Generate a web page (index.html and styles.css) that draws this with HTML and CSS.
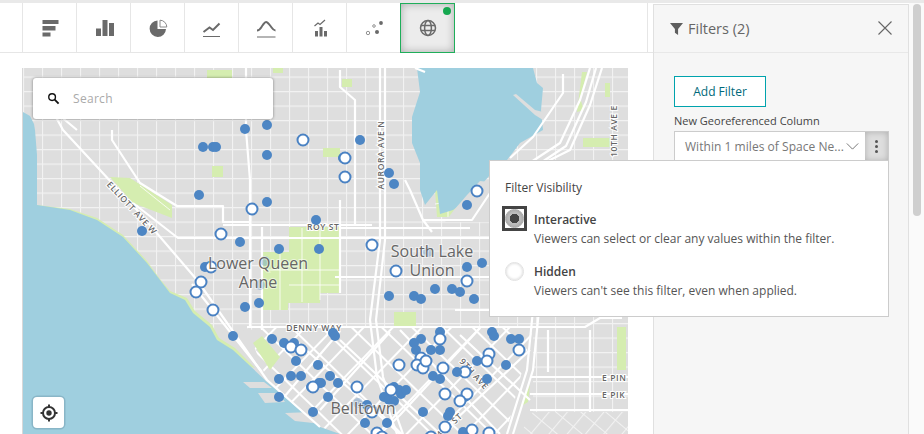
FILE: index.html
```html
<!DOCTYPE html>
<html lang="en">
<head>
<meta charset="utf-8">
<title>Map with filters</title>
<link rel="stylesheet" href="styles.css">
</head>
<body>
<div class="page">
  <main class="main">
    <nav class="toolbar">
      <button class="tool"><svg class="ico" viewBox="0 0 24 24"><path d="M4.500 4h16v4h-16zM4.500 10h13v4.500h-13zM4.500 16.500h8v4h-8z"/></svg></button>
      <button class="tool"><svg class="ico" viewBox="0 0 24 24"><path d="M4 12.500h5V20H4zM10.500 4H15.500V20h-5zM17 7h5v13h-5z"/></svg></button>
      <button class="tool"><svg class="ico" viewBox="0 0 24 24"><path d="M11.500 4.500v8.500h8.500A8.200 8.200 0 1 1 11.500 4.500z"/><path d="M14 4.200v6.800h6.800A6.900 6.900 0 0 0 14 4.200z" class="ico-slice"/></svg></button>
      <button class="tool"><svg class="ico" viewBox="0 0 24 24"><path d="M3.500 16l6-4.500 3.500 2.500 6.500-6.500" class="ico-line"/><path d="M3 20h17v1H3z"/></svg></button>
      <button class="tool"><svg class="ico" viewBox="0 0 24 24"><path d="M3 14.500c3 0 4-3 5.500-5S10.500 6 12 6s3 2 4.500 4S19 14.500 21.500 14.500" class="ico-line"/><path d="M3 20.500H21.500v1H3z"/></svg></button>
      <button class="tool"><svg class="ico" viewBox="0 0 24 24"><path d="M7 15h3v5.500H7zM11.500 11h3v9.500h-3zM16 15h3v5.500h-3z"/><path d="M6.500 10l3.500-3 2 1.500 5-4.500" class="ico-thin"/></svg></button>
      <button class="tool"><svg class="ico" viewBox="0 0 24 24"><circle cx="19" cy="7" r="1.900"/><circle cx="15" cy="16" r="2"/><circle cx="12" cy="10" r="1.300" class="ico-hollow"/><circle cx="6" cy="17" r="1.700" class="ico-hollow"/></svg></button>
      <button class="tool tool-active"><span class="badge"></span><svg class="ico" viewBox="0 0 24 24"><g class="ico-globe"><circle cx="12" cy="12" r="7.500"/><ellipse cx="12" cy="12" rx="3.400" ry="7.500"/><path d="M5 9.500h14M5 14.500h14"/></g></svg></button>
      <span class="toolbar-end"></span>
    </nav>
    <section class="map-wrap">
      <div class="map">
        <svg class="map-svg" viewBox="23 68 605 366" preserveAspectRatio="none">
          <defs>
            <pattern id="gridA" width="19" height="14.500" patternUnits="userSpaceOnUse" x="4" y="4">
              <path d="M0 .5H19M.5 0V14.500" class="grid-line"/>
            </pattern>
            <pattern id="gridB" width="21" height="21" patternUnits="userSpaceOnUse" patternTransform="rotate(44 300 340)">
              <path d="M0 1H21M1 0V21" class="grid-heavy"/>
            </pattern>
            <pattern id="gridC" width="14" height="16" patternUnits="userSpaceOnUse" patternTransform="rotate(40 560 420)">
              <path d="M0 .5H14M.5 0V16" class="grid-line"/>
            </pattern>
          </defs>
          <rect x="23" y="68" width="605" height="366" class="land"/>
          <rect x="23" y="68" width="605" height="366" fill="url(#gridA)"/>
          <path d="M140 340L270 328H533V434H300z" class="land"/>
          <path d="M247 328L267 380 320 427 340 434H506L533 328z" fill="url(#gridB)"/>
          <path d="M533 412H628V434H520z" class="land"/>
          <path d="M533 412H628V434H520z" fill="url(#gridC)"/>

          <g class="park">
            <path d="M207 70h25v8h-25zM273 68h10v5h-10zM342 79h10v8h-10zM212 166h11v11h-11z"/>
            <path d="M110 177L130 178 172 205V218L133 203z"/>
            <path d="M289 227H340V293H320V303H288V310H263V252H289z"/>
            <path d="M37 205L70 209 97 218 123 235 147 261 160 279 170 291 187 298 195 311 212 325 219 338 235 348 249 362 255 368 247 366 230 354 212 342 205 330 190 318 180 303 165 298 150 278 120 240 95 224 68 214 37 207z"/>
            <path d="M253 343L262 336 280 357 270 370z"/>
            <path d="M435 190H460V217H437zM323 148H340V157H323zM583 138H610V147H583zM605 83H610V97H605zM617 327H626V370H617zM394 312H416V326H394zM520 407L530 385 528 402z"/>
            <path d="M582 72L587 72 580 98 584 110 577 112z"/>
          </g>
          <path class="grid-soft" d="M435 204L460 200M448 190V217M302 228V302M320 228V300M264 270H340M280 252V310M289 285H340M140 186L170 210"/>

          <path class="water" d="M23 112L30 116 34 124 35 130 37 155 37 205 70 210 97 220 123 237 147 263 160 280 170 293 185 300 193 313 210 327 217 340 233 350 247 363 267 382 320 427 340 434H23z"/>
          <path class="water" d="M417 68H533L537 83 543 88 541 110 543 130 520 143 507 160 490 175 483 183 467 200 453 210 440 214 437 190 425 205 420 190 420 163 412 143 412 117 420 92z"/>
          <path class="land" d="M513 95L516 94 535 110 543 112V120L535 115zM243 382L264 382 272 388H250zM258 393L278 393 285 402 265 403zM285 413L312 412 322 424 295 421z"/>
          <path class="land" d="M454 210L467 195 480 181 489 182V222H445z"/>

          <g class="road">
            <path d="M40 88L63 130 137 210 197 280 267 380 320 427"/>
            <path d="M53 110L77 130M192 284L262 372"/>
            <path d="M112 130V140L140 183 177 206H223V222H250"/>
            <path d="M133 203L178 238H505"/>
            <path d="M223 225H340H372M340 228H470"/>
            <path d="M246 68V130L250 180V327"/>
            <path d="M262 227V330"/>
            <path d="M247 327H585L600 318 622 318"/>
            <path d="M380 68V240L370 320 377 377 397 434"/>
            <path d="M385 68V240L376 320 383 377 403 434"/>
            <path d="M340 70V87L355 100V225"/>
            <path d="M340 200V293"/>
            <path d="M423 220H472L490 193M432 232L423 220 410 190 405 180"/>
            <path d="M563 74V93L533 137 510 158M590 68L580 100 560 143 522 168M596 68L586 102 566 146 530 170M602 68L590 105 570 150 540 165"/>
            <path d="M335 277H489M455 310H490M415 68L425 72"/>
            <path d="M533 310L527 370 507 434"/>
            <path d="M539 310L533 370 513 434"/>
            <path d="M530 377H628M530 394H628M530 410H628M590 330V412M548 330V372"/>
            <path d="M340 331L300 378 285 396M390 332L320 410M480 328L400 415 380 434M530 350L440 434"/>
            <path d="M295 340L400 434M340 340L440 434M400 330L500 434M460 335L530 400"/>
          </g>

          <g class="label">
            <text x="132" y="211" class="street" transform="rotate(47 132 208)" text-anchor="middle">ELLIOTT AVE W</text>
            <text x="384" y="155" class="street" transform="rotate(-90 384 155)" text-anchor="middle">AURORA AVE N</text>
            <text x="617" y="131" class="street" transform="rotate(-90 617 131)" text-anchor="middle">10TH AVE E</text>
            <text x="314" y="331" class="street" text-anchor="middle">DENNY WAY</text>
            <text x="307" y="230" class="street">ROY ST</text>
            <text x="474" y="377" class="street" transform="rotate(48 474 374)" text-anchor="middle">9TH AVE</text>
            <text x="602" y="381" class="street">E PIN</text>
            <text x="602" y="398" class="street">E PIK</text>
            <text x="450" y="428" class="street" transform="rotate(-42 450 426)" text-anchor="middle">4TH ST</text>
          </g>

          <g class="dot">
            <circle cx="245" cy="129" r="5"/><circle cx="267" cy="125" r="5"/><circle cx="203" cy="147" r="5"/><circle cx="213" cy="147" r="5"/><circle cx="216" cy="147" r="5"/><circle cx="267" cy="155" r="5"/><circle cx="199" cy="195" r="5"/><circle cx="267" cy="202" r="5"/><circle cx="316" cy="220" r="5"/><circle cx="240" cy="242" r="5"/><circle cx="279" cy="249" r="5"/><circle cx="319" cy="249" r="5"/><circle cx="142" cy="231" r="5"/><circle cx="205" cy="267" r="5"/><circle cx="245" cy="307" r="5"/><circle cx="259" cy="303" r="5"/><circle cx="233" cy="336" r="5"/><circle cx="272" cy="339" r="5"/><circle cx="284" cy="343" r="5"/><circle cx="294" cy="343" r="5"/><circle cx="296" cy="361" r="5"/><circle cx="318" cy="365" r="5"/><circle cx="279" cy="379" r="5"/><circle cx="291" cy="376" r="5"/><circle cx="301" cy="376" r="5"/><circle cx="311" cy="387" r="5"/><circle cx="319" cy="383" r="5"/><circle cx="279" cy="397" r="5"/><circle cx="313" cy="412" r="5"/>
            <circle cx="360" cy="140" r="5"/><circle cx="343" cy="158" r="5"/><circle cx="389" cy="173" r="5"/><circle cx="394" cy="184" r="5"/><circle cx="467" cy="205" r="5"/><circle cx="482" cy="263" r="5"/><circle cx="467" cy="267" r="5"/><circle cx="435" cy="289" r="5"/><circle cx="452" cy="289" r="5"/><circle cx="460" cy="292" r="5"/><circle cx="474" cy="299" r="5"/><circle cx="389" cy="296" r="5"/><circle cx="414" cy="296" r="5"/><circle cx="421" cy="299" r="5"/>
            <circle cx="333" cy="333" r="5"/><circle cx="335" cy="336" r="5"/><circle cx="440" cy="332" r="5"/><circle cx="421" cy="339" r="5"/><circle cx="414" cy="343" r="5"/><circle cx="416" cy="350" r="5"/><circle cx="431" cy="350" r="5"/><circle cx="440" cy="350" r="5"/><circle cx="492" cy="332" r="5"/><circle cx="494" cy="336" r="5"/><circle cx="511" cy="339" r="5"/><circle cx="519" cy="339" r="5"/><circle cx="477" cy="361" r="5"/><circle cx="506" cy="365" r="5"/><circle cx="433" cy="376" r="5"/><circle cx="440" cy="379" r="5"/><circle cx="487" cy="379" r="5"/><circle cx="330" cy="376" r="5"/><circle cx="338" cy="383" r="5"/><circle cx="321" cy="383" r="5"/><circle cx="328" cy="397" r="5"/><circle cx="394" cy="387" r="5"/><circle cx="399" cy="390" r="5"/><circle cx="401" cy="394" r="5"/><circle cx="406" cy="390" r="5"/><circle cx="384" cy="397" r="5"/><circle cx="389" cy="400" r="5"/><circle cx="394" cy="401" r="5"/><circle cx="465" cy="397" r="5"/><circle cx="423" cy="412" r="5"/><circle cx="450" cy="412" r="5"/><circle cx="448" cy="416" r="5"/><circle cx="367" cy="405" r="5"/><circle cx="365" cy="423" r="5"/><circle cx="387" cy="423" r="5"/><circle cx="463" cy="432" r="5"/>
          </g>
          <g class="ring">
            <circle cx="303" cy="140" r="5.500"/><circle cx="252" cy="209" r="5.500"/><circle cx="221" cy="234" r="5.500"/><circle cx="211" cy="267" r="5.500"/><circle cx="201" cy="282" r="5.500"/><circle cx="196" cy="292" r="5.500"/><circle cx="213" cy="310" r="5.500"/><circle cx="291" cy="347" r="5.500"/><circle cx="301" cy="350" r="5.500"/><circle cx="313" cy="387" r="5.500"/>
            <circle cx="345" cy="158" r="5.500"/><circle cx="345" cy="177" r="5.500"/><circle cx="477" cy="191" r="5.500"/><circle cx="372" cy="245" r="5.500"/><circle cx="396" cy="271" r="5.500"/><circle cx="467" cy="281" r="5.500"/>
            <circle cx="440" cy="339" r="5.500"/><circle cx="519" cy="350" r="5.500"/><circle cx="489" cy="354" r="5.500"/><circle cx="487" cy="361" r="5.500"/><circle cx="399" cy="365" r="5.500"/><circle cx="421" cy="358" r="5.500"/><circle cx="417" cy="365" r="5.500"/><circle cx="423" cy="368" r="5.500"/><circle cx="426" cy="361" r="5.500"/><circle cx="443" cy="368" r="5.500"/><circle cx="465" cy="372" r="5.500"/><circle cx="357" cy="387" r="5.500"/><circle cx="391" cy="390" r="5.500"/><circle cx="445" cy="394" r="5.500"/><circle cx="467" cy="394" r="5.500"/><circle cx="460" cy="401" r="5.500"/><circle cx="372" cy="412" r="5.500"/><circle cx="377" cy="433" r="5.500"/><circle cx="382" cy="437" r="5.500"/><circle cx="445" cy="427" r="5.500"/><circle cx="472" cy="430" r="5.500"/><circle cx="489" cy="433" r="5.500"/><circle cx="431" cy="437" r="5.500"/>
          </g>
          <circle cx="457" cy="372" r="5" class="dot-top"/>
          <g class="dot-faint">
            <circle cx="265" cy="261" r="5"/><circle cx="260" cy="285" r="5"/><circle cx="428" cy="252" r="5"/><circle cx="358" cy="403" r="5"/>
          </g>
          <g class="place">
            <text x="258" y="269" text-anchor="middle">Lower Queen</text>
            <text x="258" y="288" text-anchor="middle">Anne</text>
            <text x="432" y="257" text-anchor="middle">South Lake</text>
            <text x="432" y="276" text-anchor="middle">Union</text>
            <text x="363" y="414" text-anchor="middle">Belltown</text>
          </g>
        </svg>
        <div class="search">
          <svg class="search-ico" viewBox="0 0 14 14"><circle cx="5.500" cy="5.500" r="3.600"/><path d="M8.300 8.300L12.500 12.500"/></svg>
          <span class="search-text">Search</span>
        </div>
        <button class="locate">
          <svg viewBox="0 0 20 20" class="locate-ico"><circle cx="10" cy="10" r="6"/><circle cx="10" cy="10" r="2.700" class="locate-dot"/><path d="M10 1.500V4M10 16v2.500M1.500 10H4M16 10h2.500"/></svg>
        </button>
      </div>
    </section>
  </main>
  <aside class="panel">
    <header class="panel-head">
      <svg class="funnel" viewBox="0 0 14 14"><path d="M0 1h14L8.700 7.500V14L5.300 11.500V7.500z"/></svg>
      <h2 class="panel-title">Filters (2)</h2>
      <svg class="close" viewBox="0 0 14 14"><path d="M.5.500L13.500 13.500M13.500.500L.5 13.500"/></svg>
    </header>
    <div class="panel-body">
      <button class="add-filter">Add Filter</button>
      <div class="field-label">New Georeferenced Column</div>
      <div class="select">
        <span class="select-text">Within 1 miles of Space Ne...</span>
        <svg class="chev" viewBox="0 0 14 8"><path d="M.5.500L7 7 13.500.500"/></svg>
        <span class="kebab"><i></i><i></i><i></i></span>
      </div>
    </div>
  </aside>
  <div class="scrollbar"><div class="thumb"></div></div>
  <div class="popup">
    <div class="popup-title">Filter Visibility</div>
    <div class="option option-first">
      <span class="radio-focus"><span class="radio radio-on"></span></span>
      <div class="option-text">
        <div class="option-name">Interactive</div>
        <div class="option-desc">Viewers can select or clear any values within the filter.</div>
      </div>
    </div>
    <div class="option">
      <span class="radio-slot"><span class="radio"></span></span>
      <div class="option-text">
        <div class="option-name">Hidden</div>
        <div class="option-desc">Viewers can't see this filter, even when applied.</div>
      </div>
    </div>
  </div>
</div>
</body>
</html>
```
FILE: styles.css
```css
* { box-sizing: border-box; }
html, body { margin: 0; height: 100%; overflow: hidden; background: #fff; }
body { font-family: "Open Sans", "Liberation Sans", sans-serif; color: #444; }
button { font-family: inherit; padding: 0; margin: 0; background: none; border: 0; }

.page { position: relative; display: flex; width: 924px; height: 434px; border-top: 3px solid #e9e9e9; overflow: hidden; }

.main { width: 653px; flex: none; display: flex; flex-direction: column; }
.toolbar { display: flex; height: 50px; padding-left: 22px; border-bottom: 1px solid #e6e6e6; flex: none; }
.toolbar-end { margin-left: auto; width: 6px; height: 49px; border-left: 1px solid #e6e6e6; }
.tool { width: 54px; height: 49px; border-left: 1px solid #e6e6e6; display: flex; align-items: center; justify-content: center; position: relative; }
.tool-active { width: 55px; height: 50px; border: 1px solid #1fae5a; background: #ececec; box-shadow: inset 0 0 8px rgba(0,0,0,.28); }
.badge { position: absolute; top: 3px; right: 3px; width: 8px; height: 8px; border-radius: 50%; background: #16a850; }
.ico { width: 24px; height: 24px; fill: #6a6a6a; }
.ico-slice { fill: #fff; stroke: #8a8a8a; stroke-width: 1; }
.ico-line { fill: none; stroke: #6a6a6a; stroke-width: 2; }
.ico-thin { fill: none; stroke: #6a6a6a; stroke-width: 1.200; }
.ico-hollow { fill: none; stroke: #777; stroke-width: .8; }
.ico-globe { fill: none; stroke: #6a6a6a; stroke-width: 1.500; }

.map-wrap { flex: 1; padding: 15px 25px 0 23px; min-height: 0; }
.map { position: relative; width: 605px; height: 366px; overflow: hidden; box-shadow: -1px 0 0 #d8d8d8; }
.map-svg { display: block; width: 605px; height: 366px; }
.land { fill: #dedede; }
.water { fill: #9fcfdf; }
.park > path { fill: #d5edb0; }
.grid-line { fill: none; stroke: #f2f2f2; stroke-width: 1.200; }
.grid-heavy { fill: none; stroke: #fff; stroke-width: 2; }
.grid-soft { fill: none; stroke: #fff; stroke-width: 1; opacity: .8; }
.road path { fill: none; stroke: #fff; stroke-width: 2.200; stroke-linejoin: round; }
.street { font-size: 8.500px; letter-spacing: .6px; fill: #666; stroke: #fff; stroke-width: 2px; paint-order: stroke; font-weight: 600; }
.dot circle, .dot-top { fill: #4d86c4; }
.dot-faint circle { fill: #4d86c4; opacity: .35; }
.ring circle { fill: #fff; stroke: #4a82c3; stroke-width: 2; }
.place text { font-size: 16px; fill: #666; stroke: #fff; stroke-opacity: .55; stroke-width: 2px; paint-order: stroke; }

.search { position: absolute; left: 10px; top: 10px; width: 240px; height: 41px; background: #fff; border-radius: 3px; box-shadow: 0 0 3px rgba(0,0,0,.45); display: flex; align-items: center; padding-left: 14px; }
.search-ico { width: 13px; height: 13px; fill: none; stroke: #111; stroke-width: 1.500; }
.search-ico path { stroke-width: 2; }
.search-text { margin-left: 13px; font-size: 12px; color: #aaa; letter-spacing: .3px; }
.locate { position: absolute; left: 10px; top: 329px; width: 31px; height: 31px; background: #fff; border-radius: 4px; box-shadow: 0 0 0 1.500px rgba(110,150,170,.45); display: flex; align-items: center; justify-content: center; }
.locate-ico { width: 20px; height: 20px; fill: none; stroke: #333; stroke-width: 2; }
.locate-dot { fill: #333; stroke: none; }

.panel { width: 256px; flex: none; margin-top: 1px; background: #f6f6f6; border: 1px solid #e0e0e0; border-bottom: 0; display: flex; flex-direction: column; }
.panel-head { height: 48px; display: flex; align-items: center; padding: 0 16px; border-bottom: 1px solid #e8e8e8; }
.funnel { width: 13px; height: 13px; fill: #5e5e5e; margin-top: -1px; }
.panel-title { margin: 0 0 0 5px; flex: 1; font-size: 14.500px; font-weight: 400; color: #666; }
.close { width: 14px; height: 14px; fill: none; stroke: #666; stroke-width: 1.100; margin-top: -1px; }
.panel-body { padding: 23px 19px 0 20px; }
.add-filter { display: block; width: 92px; height: 31px; border: 1px solid #00a3ad; background: #fff; color: #00697a; font-size: 12px; }
.field-label { margin-top: 6px; font-size: 11px; line-height: 15px; color: #444; height: 18px; }
.select { display: flex; align-items: center; width: 215px; height: 31px; border: 1px solid #ccc; background: #fff; padding-left: 10px; }
.select-text { font-size: 12px; letter-spacing: .04px; color: #777; white-space: nowrap; }
.chev { width: 13px; height: 7px; fill: none; stroke: #666; stroke-width: 1; margin-left: 2px; flex: none; }
.kebab { margin-left: auto; width: 23px; height: 29px; background: #dedede; box-shadow: inset 0 0 6px rgba(0,0,0,.22); display: flex; flex-direction: column; align-items: center; justify-content: center; gap: 2px; flex: none; }
.kebab i { display: block; width: 3px; height: 3px; background: #555; border-radius: 50%; }

.scrollbar { flex: 1; display: flex; justify-content: center; padding: 1px 3px 0 4px; background: #fafafa; }
.thumb { width: 8px; height: 212px; background: #cfcfcf; border-radius: 4px; }

.popup { position: absolute; left: 489px; top: 157px; width: 400px; height: 157px; background: #fff; border: 1px solid #ccc; padding: 18px 15px 0 12px; }
.popup-title { font-size: 12px; line-height: 17px; color: #444; margin-left: 3px; }
.option { display: flex; margin-top: 11px; }
.option-first { margin-top: 10px; }
.radio-focus { width: 25px; height: 25px; flex: none; border: 3px solid #444; display: flex; align-items: center; justify-content: center; margin-right: 7px; }
.radio-slot { width: 25px; height: 25px; flex: none; display: flex; align-items: center; justify-content: center; margin-right: 7px; margin-top: 1px; }
.radio { display: block; width: 19px; height: 19px; border-radius: 50%; background: #fff; box-shadow: inset 0 0 3px rgba(0,0,0,.2); border: 1px solid #e2e2e2; }
.radio-on { background: radial-gradient(circle, #444 0 4.500px, #bdbdbd 5px); border-color: #aaa; }
.option-name { font-size: 12px; line-height: 17px; font-weight: 600; color: #444; margin-top: 5px; }
.option-desc { font-size: 12px; line-height: 17px; color: #555; margin-top: 2px; }
```
